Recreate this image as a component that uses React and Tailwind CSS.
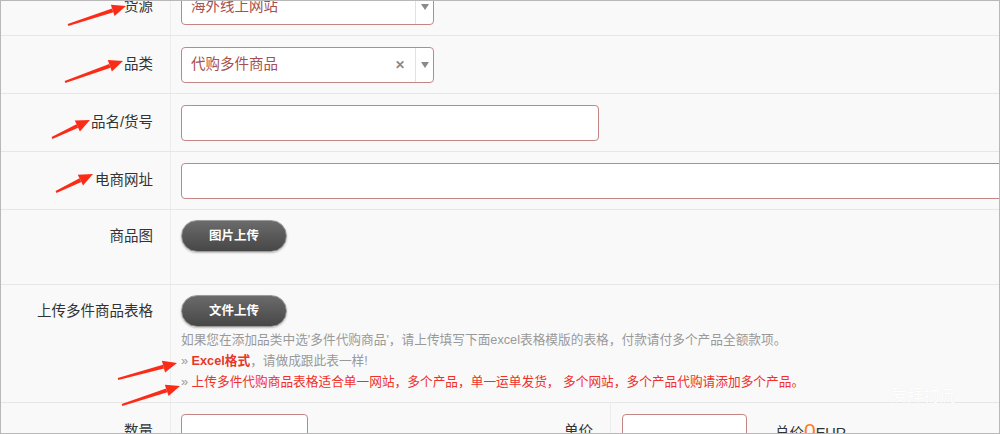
import React from "react";

// annotation arrows (tail -> head), page coordinates
const ARROWS = [
  [[67, 24], [125, 5]],
  [[64, 81], [122, 60]],
  [[51, 137], [89, 119]],
  [[55, 191], [92, 173]],
  [[117, 378], [176, 362]],
  [[121, 404], [179, 385]],
];

function Arrow({ from, to }) {
  const [x1, y1] = from;
  const [x2, y2] = to;
  const len = Math.hypot(x2 - x1, y2 - y1);
  const dx = (x2 - x1) / len;
  const dy = (y2 - y1) / len;
  const nx = -dy;
  const ny = dx;
  const bx = x2 - dx * 14;
  const by = y2 - dy * 14;
  const head = `${x2},${y2} ${bx + nx * 6},${by + ny * 6} ${bx - nx * 6},${by - ny * 6}`;
  const body = `${x1 + nx * 1},${y1 + ny * 1} ${bx + nx * 2},${by + ny * 2} ${bx - nx * 2},${by - ny * 2} ${x1 - nx * 1},${y1 - ny * 1}`;
  return (
    <g fill="#fb2c17">
      <polygon points={body} />
      <polygon points={head} />
    </g>
  );
}

function Select({ value, clear }) {
  return (
    <div className="w-[253px] h-[36px] bg-white border border-[#c48585] rounded-[4px] flex items-center">
      <span className="flex-1 pl-[9px] text-[14.5px] text-[#a8504e]">{value}</span>
      {clear && <span className="mr-[10px] text-[12px] font-bold text-[#888]">✕</span>}
      <div className="w-[18px] h-full border-l border-[#e2e2e2] flex items-center justify-center">
        <span className="w-0 h-0 border-l-[4px] border-r-[4px] border-t-[6px] border-l-transparent border-r-transparent border-t-[#8a8a8a]" />
      </div>
    </div>
  );
}

function Input({ className }) {
  return <div className={"h-[36px] bg-white border border-[#c48585] rounded-[4px] " + className} />;
}

function Button({ children }) {
  return (
    <div className="w-[106px] h-[32px] rounded-full bg-gradient-to-b from-[#6b6b6b] to-[#474747] border border-[#9a9a9a] shadow-[0_1px_2px_rgba(0,0,0,0.25)] flex items-center justify-center text-white text-[12.5px] font-bold">
      {children}
    </div>
  );
}

function Row({ label, children }) {
  return (
    <div className="flex h-[58px] border-b border-[#e6e6e6]">
      <div className="w-[170px] shrink-0 border-r border-[#ececec] flex items-center justify-end pr-[17px] text-[14.5px] text-[#333]">
        {label}
      </div>
      <div className="flex-1 pl-[10px] flex items-center">{children}</div>
    </div>
  );
}

export default function App() {
  return (
    <div className="relative w-[1000px] h-[434px] overflow-hidden border border-[#b8b8b8] bg-[#f9f9f9] font-['Liberation_Sans','Noto_Sans_CJK_SC',sans-serif]">
      <div className="-mt-[23px]">
        <Row label="货源">
          <Select value="海外线上网站" />
        </Row>
        <Row label="品类">
          <Select value="代购多件商品" clear />
        </Row>
        <Row label="品名/货号">
          <Input className="w-[418px]" />
        </Row>
        <Row label="电商网址">
          <Input className="w-[830px]" />
        </Row>

        <div className="flex h-[75px] border-b border-[#e6e6e6]">
          <div className="w-[170px] shrink-0 border-r border-[#ececec] pt-[10px] pr-[17px] text-right text-[14.5px] leading-[32px] text-[#333]">
            商品图
          </div>
          <div className="flex-1 pl-[10px] pt-[10px]">
            <Button>图片上传</Button>
          </div>
        </div>

        <div className="flex h-[118px] border-b border-[#e6e6e6]">
          <div className="w-[170px] shrink-0 border-r border-[#ececec] pt-[10px] pr-[17px] text-right text-[14.5px] leading-[32px] text-[#333]">
            上传多件商品表格
          </div>
          <div className="flex-1 pl-[10px] pt-[10px]">
            <Button>文件上传</Button>
            <div className="mt-[3px] text-[12.7px] leading-[21px] text-[#999]">
              <p>如果您在添加品类中选'多件代购商品'，请上传填写下面excel表格模版的表格，付款请付多个产品全额款项。</p>
              <p>
                » <span className="font-bold text-[#e8362b]">Excel格式</span>，请做成跟此表一样!
              </p>
              <p>
                » <span className="text-[#f0302a]">上传多件代购商品表格适合单一网站，多个产品，单一运单发货， 多个网站，多个产品代购请添加多个产品。</span>
              </p>
            </div>
          </div>
        </div>

        <div className="flex h-[58px]">
          <div className="w-[170px] shrink-0 border-r border-[#ececec] flex items-center justify-end pr-[17px] text-[14.5px] text-[#333]">
            数量
          </div>
          <div className="flex-1 pl-[10px] flex items-center">
            <Input className="w-[127px]" />
            <div className="w-[303px] h-full border-r border-[#ececec] flex items-center justify-end pr-[17px] text-[14.5px] text-[#333]">
              单价
            </div>
            <Input className="ml-[11px] w-[125px]" />
            <div className="ml-[28px] flex items-baseline text-[14.5px] text-[#333]">
              总价<span className="text-[21px] leading-none text-[#ff7a1a]">0</span>EUR
            </div>
          </div>
        </div>
      </div>

      <div className="absolute left-[890px] top-[383px] text-[16px] text-white [text-shadow:0_0_1px_rgba(0,0,0,0.08)]">
        爱拜物流
      </div>

      <svg className="absolute left-0 top-0 pointer-events-none" width="1000" height="434">
        {ARROWS.map(([f, t], i) => (
          <Arrow key={i} from={f} to={t} />
        ))}
      </svg>
    </div>
  );
}
